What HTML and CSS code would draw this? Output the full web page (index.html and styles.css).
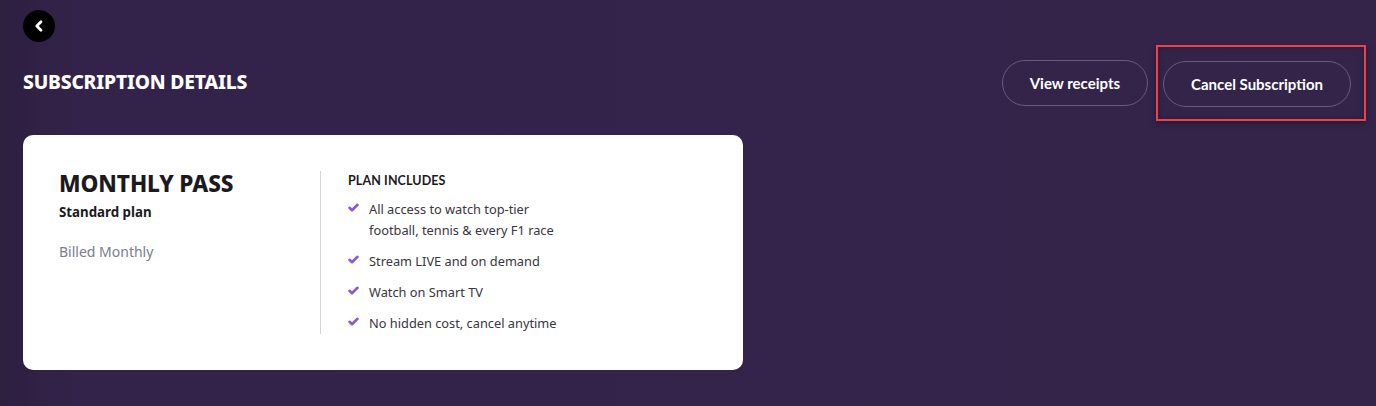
FILE: index.html
```html
<!DOCTYPE html>
<html lang="en">
<head>
<meta charset="utf-8">
<title>Subscription details</title>
<link rel="stylesheet" href="styles.css">
</head>
<body>
<div class="page">
  <button class="back" aria-label="Back">
    <svg width="14" height="14" viewBox="0 0 14 14"><path d="M9 2.8 L4.8 7 L9 11.2" fill="none" stroke="#fff" stroke-width="2.8" stroke-linecap="round" stroke-linejoin="round"/></svg>
  </button>
  <div class="header">
    <h1 class="title">SUBSCRIPTION DETAILS</h1>
    <div class="actions">
      <button class="pill">View receipts</button>
      <div class="highlight">
        <button class="pill">Cancel Subscription</button>
      </div>
    </div>
  </div>
  <div class="card">
    <div class="plan">
      <h2 class="plan-name">MONTHLY PASS</h2>
      <div class="plan-type">Standard plan</div>
      <div class="plan-billing">Billed Monthly</div>
    </div>
    <div class="divider"></div>
    <div class="includes">
      <h3 class="includes-title">PLAN INCLUDES</h3>
      <ul class="features">
        <li><span class="check"><svg width="11" height="9" viewBox="0 0 11 9"><path d="M1.5 4.8 L4 7.2 L9.5 1.8" fill="none" stroke="#8a5ad0" stroke-width="2.6" stroke-linecap="round" stroke-linejoin="round"/></svg></span><span>All access to watch top-tier<br>football, tennis &amp; every F1 race</span></li>
        <li><span class="check"><svg width="11" height="9" viewBox="0 0 11 9"><path d="M1.5 4.8 L4 7.2 L9.5 1.8" fill="none" stroke="#8a5ad0" stroke-width="2.6" stroke-linecap="round" stroke-linejoin="round"/></svg></span><span>Stream LIVE and on demand</span></li>
        <li><span class="check"><svg width="11" height="9" viewBox="0 0 11 9"><path d="M1.5 4.8 L4 7.2 L9.5 1.8" fill="none" stroke="#8a5ad0" stroke-width="2.6" stroke-linecap="round" stroke-linejoin="round"/></svg></span><span>Watch on Smart TV</span></li>
        <li><span class="check"><svg width="11" height="9" viewBox="0 0 11 9"><path d="M1.5 4.8 L4 7.2 L9.5 1.8" fill="none" stroke="#8a5ad0" stroke-width="2.6" stroke-linecap="round" stroke-linejoin="round"/></svg></span><span>No hidden cost, cancel anytime</span></li>
      </ul>
    </div>
  </div>
</div>
</body>
</html>
```
FILE: styles.css
```css
* { box-sizing: border-box; }
html, body { margin: 0; padding: 0; }
body {
  background: linear-gradient(90deg, #2d1f40 0px, #33234a 80px, #34244a 100%);
  font-family: "Noto Sans", "Open Sans", sans-serif;
  color: #fff;
  height: 406px;
  overflow: hidden;
}
.page {
  padding: 10px 10px 0 23px;
}
.back {
  width: 32px;
  height: 32px;
  border-radius: 50%;
  background: #000;
  border: none;
  padding: 0;
  display: flex;
  align-items: center;
  justify-content: center;
  cursor: pointer;
}
.back svg { margin-left: -1px; }
.header {
  display: flex;
  justify-content: space-between;
  align-items: center;
  margin-top: 3px;
}
.title {
  margin: 0;
  font-size: 19.3px;
  font-weight: 800;
  letter-spacing: -0.2px;
  margin-top: -3px;
}
.actions {
  display: flex;
  align-items: center;
  gap: 8px;
}
.pill {
  height: 46px;
  padding: 0 27px;
  border-radius: 23px;
  border: 1px solid #6a5a80;
  background: transparent;
  color: #fff;
  font-family: "Lato", "Noto Sans", sans-serif;
  font-weight: 700;
  font-size: 15px;
  cursor: pointer;
}
.highlight {
  border: 2px solid #f0404a;
  padding: 14px 13px 12px 5px;
  box-shadow: inset 0 0 6px rgba(0,0,0,0.25), 0 2px 6px rgba(0,0,0,0.35);
}
.card {
  margin-top: 14px;
  width: 720px;
  height: 235px;
  background: #fff;
  border-radius: 10px;
  color: #1c1a1e;
  display: flex;
  padding: 36px 36px 36px 36px;
}
.plan { width: 261px; }
.plan-name {
  margin: 0;
  font-size: 22.6px;
  font-weight: 800;
  line-height: 26px;
  letter-spacing: -0.1px;
}
.plan-type {
  margin-top: 6px;
  font-size: 13.3px;
  font-weight: 700;
}
.plan-billing {
  margin-top: 21px;
  font-size: 14px;
  color: #7b7e8c;
}
.divider {
  width: 1px;
  background: #d4d4d8;
  align-self: stretch;
}
.includes {
  padding-left: 27px;
  margin-top: 2px;
}
.includes-title {
  margin: 0;
  font-size: 12.5px;
  font-weight: 700;
  font-family: "Lato", "Noto Sans", sans-serif;
  letter-spacing: 0.1px;
}
.features {
  list-style: none;
  margin: 11px 0 0 0;
  padding: 0;
  display: flex;
  flex-direction: column;
  gap: 10px;
}
.features li {
  display: flex;
  font-size: 12.8px;
  line-height: 21px;
  color: #3a3540;
}
.check {
  width: 21px;
  height: 21px;
  display: flex;
  align-items: center;
  flex-shrink: 0;
  margin-top: -2px;
}
```
